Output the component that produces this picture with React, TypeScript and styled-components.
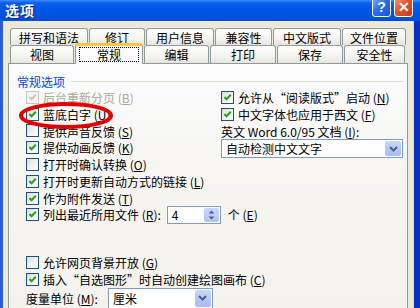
import React from 'react';
import styled, { createGlobalStyle } from 'styled-components';

const GlobalStyle = createGlobalStyle`
  body {
    margin: 0;
    background: #ece9d8;
    font-family: 'Noto Sans CJK SC', 'Noto Sans', sans-serif;
    font-size: 12px;
  }
`;

const Window = styled.div`
  width: 420px;
  height: 308px;
  overflow: hidden;
  display: flex;
  flex-direction: column;
  background: #ece9d8;
`;

const TitleBar = styled.div`
  height: 21px;
  flex: none;
  display: flex;
  align-items: flex-start;
  justify-content: space-between;
  padding: 0 7px 0 5px;
  background: linear-gradient(180deg, #3d8dff 0%, #0a5eec 14%, #0055e5 55%, #004fdc 100%);
`;

const Title = styled.span`
  margin-top: 2px;
  color: #fff;
  font-size: 14px;
  font-weight: bold;
  line-height: 17px;
  letter-spacing: 1px;
  text-shadow: 1px 1px 0 #0a1e7a;
`;

const TitleButtons = styled.div`
  display: flex;
  gap: 3px;
  margin-top: -3px;
`;

const CaptionButton = styled.div<{ $danger?: boolean }>`
  width: 19px;
  height: 20px;
  box-sizing: border-box;
  border: 1px solid #fff;
  border-radius: 3px;
  display: flex;
  align-items: center;
  justify-content: center;
  color: #fff;
  font-family: 'Liberation Sans', Arial, sans-serif;
  font-weight: bold;
  font-size: 14px;
  background: ${p =>
    p.$danger
      ? 'linear-gradient(135deg, #f59a7c 0%, #e2552c 45%, #c9371a 100%)'
      : 'linear-gradient(135deg, #7fb0ff 0%, #2a6ef2 45%, #1a52d8 100%)'};
`;

const Frame = styled.div`
  flex: 1;
  display: flex;
  border-left: 3px solid #2b5cd8;
  border-right: 6px solid #0b30c0;
  box-shadow: inset -1px 0 0 #ded9c6;
`;

const Body = styled.div`
  flex: 1;
  display: flex;
  flex-direction: column;
  padding: 7px 7px 0 5px;
`;

const TabRows = styled.div`
  display: flex;
  flex-direction: column;
  padding-left: 2px;
`;

const TabRow = styled.div`
  display: flex;
  gap: 1px;
  align-items: flex-end;
  position: relative;
  z-index: 1;
`;

const Tab = styled.div<{ $w: number; $active?: boolean; $h?: number }>`
  width: ${p => p.$w}px;
  height: ${p => (p.$active ? 21 : p.$h || 17)}px;
  box-sizing: border-box;
  display: flex;
  align-items: center;
  justify-content: center;
  border: 1px solid #919b9c;
  border-bottom: none;
  border-radius: 3px 3px 0 0;
  color: #000;
  font-size: 12px;
  background: ${p => (p.$active ? '#fcfcfe' : 'linear-gradient(180deg, #ffffff 0%, #f3f3ef 60%, #e6e5df 100%)')};
  ${p =>
    p.$active
      ? `border-top: 3px solid #ffc83c; margin-top: -2px; margin-bottom: -1px; position: relative; z-index: 2; padding-bottom: 1px;`
      : ''}
`;

const FocusLabel = styled.span`
  width: 60px;
  height: 15px;
  box-sizing: border-box;
  border: 1px dotted #000;
  display: flex;
  align-items: center;
  justify-content: center;
`;

const Panel = styled.div`
  position: relative;
  flex: 1;
  border: 1px solid #919b9c;
  border-bottom: none;
  background: linear-gradient(180deg, #fcfcfe 0%, #f6f5f1 45%, #f3f2ed 100%);
  padding: 9px 4px 0 8px;
`;

const GroupHeader = styled.div`
  display: flex;
  align-items: center;
  gap: 6px;
  height: 16px;
  color: #0046d5;
`;

const GroupLine = styled.div`
  flex: 1;
  height: 1px;
  background: #dcdbd0;
`;

const Columns = styled.div`
  display: flex;
  padding-left: 9px;
`;

const Column = styled.div<{ $w?: number }>`
  display: flex;
  flex-direction: column;
  ${p => (p.$w ? `width: ${p.$w}px; flex: none;` : 'flex: 1;')}
`;

const Row = styled.div<{ $h?: number; $disabled?: boolean }>`
  height: ${p => p.$h || 16.8}px;
  display: flex;
  align-items: center;
  white-space: nowrap;
  color: ${p => (p.$disabled ? '#aca899' : '#000')};
`;

const Lower = styled.div`
  display: flex;
  flex-direction: column;
  padding-left: 9px;
  margin-top: 31px;
`;

const Box = styled.span<{ $disabled?: boolean }>`
  width: 13px;
  height: 13px;
  flex: none;
  box-sizing: border-box;
  margin-right: 4px;
  border: 1px solid ${p => (p.$disabled ? '#cac8bb' : '#1c5180')};
  background: ${p => (p.$disabled ? '#f4f3ee' : 'linear-gradient(135deg, #dcdcd7 0%, #f4f4f0 60%, #ffffff 100%)')};
  display: flex;
`;

const Input = styled.div<{ $w: number; $h: number }>`
  width: ${p => p.$w}px;
  height: ${p => p.$h}px;
  flex: none;
  box-sizing: border-box;
  border: 1px solid #7f9db9;
  background: #fff;
  display: flex;
  align-items: center;
  padding-left: 4px;
  color: #000;
`;

const InputText = styled.span`
  flex: 1;
`;

const DropButton = styled.span`
  width: 16px;
  align-self: stretch;
  margin: 1px;
  border-radius: 2px;
  background: linear-gradient(180deg, #c8d7fc 0%, #b4c8f6 50%, #a5bcf5 100%);
  display: flex;
  align-items: center;
  justify-content: center;
`;

const SpinButtons = styled.span`
  width: 15px;
  align-self: stretch;
  margin: 1px;
  border-radius: 2px;
  background: linear-gradient(180deg, #c8d7fc 0%, #b0c4f6 100%);
  display: flex;
  align-items: center;
  justify-content: center;
`;

const Ellipse = styled.svg`
  position: absolute;
  left: 10px;
  top: 38px;
  overflow: visible;
  pointer-events: none;
`;

const Checkbox = ({ checked, disabled }: { checked?: boolean; disabled?: boolean }) => (
  <Box $disabled={disabled}>
    {checked && (
      <svg width="11" height="11" viewBox="0 0 11 11">
        <path
          d="M2.5 5 L4.5 7.2 L8.8 2.8"
          fill="none"
          stroke={disabled ? '#cac8bb' : '#21a121'}
          strokeWidth="2"
        />
      </svg>
    )}
  </Box>
);

const Chevron = () => (
  <svg width="9" height="6" viewBox="0 0 9 6">
    <path d="M1 1 L4.5 4.5 L8 1" fill="none" stroke="#4d6185" strokeWidth="2" />
  </svg>
);

const Spin = () => (
  <svg width="7" height="12" viewBox="0 0 7 12">
    <path d="M0.5 4.5 L3.5 1.5 L6.5 4.5 Z M0.5 7.5 L3.5 10.5 L6.5 7.5 Z" fill="#4d6185" />
  </svg>
);

const Key = ({ k }: { k: string }) => (
  <>
    {' ('}
    <u>{k}</u>
    {')'}
  </>
);

const row1 = [
  ['拼写和语法', 78],
  ['修订', 56],
  ['用户信息', 68],
  ['兼容性', 57],
  ['中文版式', 68],
  ['文件位置', 64],
] as const;

const row2 = [
  ['视图', 64],
  ['常规', 68],
  ['编辑', 65],
  ['打印', 66],
  ['保存', 66],
  ['安全性', 61],
] as const;

export default function App() {
  return (
    <>
      <GlobalStyle />
      <Window>
        <TitleBar>
          <Title>选项</Title>
          <TitleButtons>
            <CaptionButton>?</CaptionButton>
            <CaptionButton $danger>✕</CaptionButton>
          </TitleButtons>
        </TitleBar>
        <Frame>
          <Body>
            <TabRows>
              <TabRow>
                {row1.map(([label, w]) => (
                  <Tab key={label} $w={w}>
                    {label}
                  </Tab>
                ))}
              </TabRow>
              <TabRow>
                {row2.map(([label, w]) =>
                  label === '常规' ? (
                    <Tab key={label} $w={w} $active>
                      <FocusLabel>{label}</FocusLabel>
                    </Tab>
                  ) : (
                    <Tab key={label} $w={w} $h={18}>
                      {label}
                    </Tab>
                  )
                )}
              </TabRow>
            </TabRows>
            <Panel>
              <GroupHeader>
                常规选项
                <GroupLine />
              </GroupHeader>
              <Columns>
                <Column $w={195}>
                  <Row $disabled>
                    <Checkbox checked disabled />
                    后台重新分页<Key k="B" />
                  </Row>
                  <Row>
                    <Checkbox checked />
                    蓝底白字<Key k="U" />
                  </Row>
                  <Row>
                    <Checkbox />
                    提供声音反馈<Key k="S" />
                  </Row>
                  <Row>
                    <Checkbox checked />
                    提供动画反馈<Key k="K" />
                  </Row>
                  <Row>
                    <Checkbox />
                    打开时确认转换<Key k="O" />
                  </Row>
                  <Row>
                    <Checkbox checked />
                    打开时更新自动方式的链接<Key k="L" />
                  </Row>
                  <Row>
                    <Checkbox checked />
                    作为附件发送<Key k="T" />
                  </Row>
                  <Row>
                    <Checkbox checked />
                    列出最近所用文件<Key k="R" />:
                    <Input $w={54} $h={18} style={{ marginLeft: 6, marginRight: 7 }}>
                      <InputText>4</InputText>
                      <SpinButtons>
                        <Spin />
                      </SpinButtons>
                    </Input>
                    个<Key k="E" />
                  </Row>
                </Column>
                <Column>
                  <Row>
                    <Checkbox checked />
                    允许从“阅读版式”启动<Key k="N" />
                  </Row>
                  <Row>
                    <Checkbox checked />
                    中文字体也应用于西文<Key k="F" />
                  </Row>
                  <Row>
                    英文 Word 6.0/95 文档<Key k="I" />:
                  </Row>
                  <Input $w={182} $h={19}>
                    <InputText>自动检测中文文字</InputText>
                    <DropButton>
                      <Chevron />
                    </DropButton>
                  </Input>
                </Column>
              </Columns>
              <Lower>
                <Row>
                  <Checkbox />
                  允许网页背景开放<Key k="G" />
                </Row>
                <Row>
                  <Checkbox checked />
                  插入“自选图形”时自动创建绘图画布<Key k="C" />
                </Row>
                <Row $h={21}>
                  度量单位<Key k="M" />:
                  <Input $w={105} $h={21} style={{ marginLeft: 10 }}>
                    <InputText>厘米</InputText>
                    <DropButton>
                      <Chevron />
                    </DropButton>
                  </Input>
                </Row>
              </Lower>
              <Ellipse width="94" height="27" viewBox="0 0 94 27">
                <ellipse cx="47" cy="13.5" rx="45" ry="11.5" fill="none" stroke="#e30000" strokeWidth="4" />
              </Ellipse>
            </Panel>
          </Body>
        </Frame>
      </Window>
    </>
  );
}
